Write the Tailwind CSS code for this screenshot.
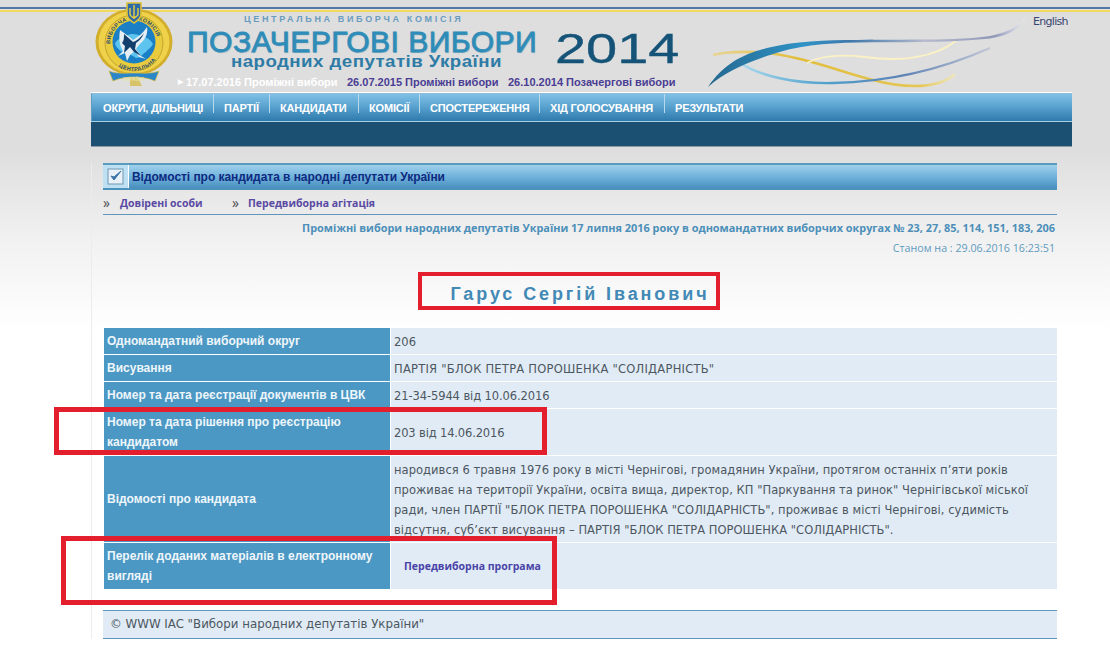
<!DOCTYPE html>
<html lang="uk"><head><meta charset="utf-8"><script src="https://cdn.jsdelivr.net/npm/@tailwindcss/browser@4"></script></head>
<body class="m-0 bg-white font-['Liberation_Sans',sans-serif]">
<div class="relative w-[1110px] h-[667px] overflow-hidden bg-[linear-gradient(#dedede_0,#dedede_150px,#f1f1f1_240px,#ffffff_330px)]">
  <div class="pt-[7px]">
    <div class="h-[2px] bg-[#5577a6]"></div>
    <div class="h-px bg-[#e4e6d8]"></div>
    <div class="h-[2px] bg-[#f2d85c]"></div>
  </div>
  <header class="relative h-[80px] w-[981px] ml-[91px]">
    <svg class="absolute left-[-1px] top-[-12px]" width="90" height="90" viewBox="0 0 90 90">
      <ellipse cx="44" cy="42" rx="38.5" ry="33.5" fill="#d2ae2c"/>
      <ellipse cx="44" cy="42" rx="35.5" ry="31" fill="#efd24a"/>
      <ellipse cx="44" cy="43" rx="29" ry="28" fill="#e9cb3e" stroke="#b79a2c" stroke-width=".8"/>
      <path id="ringt" d="M20 44a24 24 0 0 1 48 0" fill="none"/>
      <path id="ringb" d="M17 44a27 27 0 0 0 54 0" fill="none"/>
      <text font-family="Liberation Sans" font-size="5.5" font-weight="700" fill="#2b4f6e" letter-spacing=".4"><textPath href="#ringt" startOffset="0">ВИБОРЧА</textPath></text>
      <text font-family="Liberation Sans" font-size="5.5" font-weight="700" fill="#2b4f6e" letter-spacing=".4"><textPath href="#ringt" startOffset="42">КОМІСІЯ</textPath></text>
      <text font-family="Liberation Sans" font-size="5.5" font-weight="700" fill="#2b4f6e" letter-spacing=".4"><textPath href="#ringb" startOffset="26">ЦЕНТРАЛЬНА</textPath></text>
      <circle cx="44" cy="42" r="21.5" fill="#1a7fc4"/>
      <path d="M25 44c2-6 7-5 11-8 5-3 10-2 15 0 5 1 9 3 12 8-2 4-5 5-7 8-4 2-5 6-10 6-3-2-6-4-10-4-4-2-9-5-11-10z" fill="#5cc4ee"/>
      <path d="M30 30c4 3 9 6 13 10 5-3 10-7 14-13 1 6-1 11-5 15-3 3-5 5-6 7l5 7 5 3-7-2-4-6-5 4-3 6-2-8-7 3 5-5-2-4c-2-6-2-10-1-17z" fill="#e4eef3"/>
      <path d="M34 34c3 3 6 5 9 8 4-1 8-5 11-9-2 5-5 8-8 10l-1 6 6 7-7-4-4-5-6 6 1-7-3-3c2-2 2-5 2-9z" fill="#123f6c"/>
      <path d="M37 3h14v11c0 5-4 7-7 9-3-2-7-4-7-9z" fill="#2d6ba8" stroke="#dcc038" stroke-width="1.6"/>
      <path d="M44 5v14M40 8v6c0 2 2 3 4 4 2-1 4-2 4-4V8" fill="none" stroke="#e8cc3e" stroke-width="1.4"/>
      <path d="M40 78h8l4 8h-12z" fill="#d8c468"/>
      <path d="M19 71l4 10c7-3 14-4 21-4s14 1 21 4l4-10c-7 3-16 2-25 2s-18 1-25-2z" fill="#2a86c8" stroke="#d8bb3a" stroke-width=".7"/>
      <text x="44" y="80.5" text-anchor="middle" font-family="Liberation Sans" font-size="5" font-weight="700" fill="#e8e3a0">УКРАЇНА</text>
    </svg>
    <div class="absolute left-[153px] top-px text-[9px] leading-[12px] tracking-[2.65px] font-bold text-[#6a9cc0] whitespace-nowrap">ЦЕНТРАЛЬНА ВИБОРЧА КОМІСІЯ</div>
    <div class="absolute left-[96px] top-[18px] text-[30px] leading-[24px] tracking-[0.5px] text-[#2e8cb8] whitespace-nowrap [-webkit-text-stroke:0.8px_#2e8cb8] [text-shadow:1px_1px_1px_#a2b8c4]">ПОЗАЧЕРГОВІ ВИБОРИ</div>
    <div class="absolute left-[140px] top-[42px] text-[17px] leading-[16px] font-bold tracking-[0.4px] scale-x-[1.1] origin-left text-[#2e7ba6] whitespace-nowrap">народних депутатів України</div>
    <div class="absolute left-[464px] top-[11px] text-[43px] leading-[50px] scale-x-[1.3] origin-left text-[#155478] whitespace-nowrap [-webkit-text-stroke:0.4px_#155478]">2014</div>
    <div class="absolute left-[87px] top-[63px] flex items-center text-[11px] leading-[14px] font-bold whitespace-nowrap">
      <span class="text-white text-[7px] w-[8px]">▶</span>
      <span class="text-white w-[161px]">17.07.2016 Проміжні вибори</span>
      <span class="text-[#4a3d94] w-[161px]">26.07.2015 Проміжні вибори</span>
      <span class="text-[#4a3d94]">26.10.2014 Позачергові вибори</span>
    </div>
    <svg class="absolute left-[609px] top-[-2px]" width="340" height="85" viewBox="0 0 340 85" fill="none">
      <path d="M13 45C30 41 55 41 75 44C115 50 140 62 173 70C195 76 235 82 255 64" stroke="url(#b)" stroke-width="2.6"/>
      <path d="M40 53C60 66 95 74 133 73C190 72 240 60 290 38" stroke="url(#c)" stroke-width="2.4"/>
      <path d="M107 53C120 46 140 44 165 47C200 52 235 48 257 30" stroke="#fbf1c4" stroke-width="1.8"/>
      <path d="M8 77C25 52 45 44 67 38C95 31 125 30 157 30C200 29 260 31 290 26C310 22 322 15 326 5C322 20 305 27 285 29C240 33 200 32 157 32.5C125 33 95 36 70 45C45 53 25 62 8 77z" fill="url(#a)"/>
      <defs>
        <linearGradient id="a" x1="0" x2="1"><stop offset="0" stop-color="#24688f"/><stop offset=".3" stop-color="#2f93c6"/><stop offset=".45" stop-color="#3f78ab"/><stop offset=".68" stop-color="#b6bacd"/><stop offset=".9" stop-color="#8e98b8"/><stop offset="1" stop-color="#eeeef2"/></linearGradient>
        <linearGradient id="b" x1="0" x2="1"><stop offset="0" stop-color="#e6d596"/><stop offset=".35" stop-color="#e2bd3c"/><stop offset=".85" stop-color="#e5c654"/><stop offset="1" stop-color="#efe6bc"/></linearGradient>
        <linearGradient id="c" x1="0" x2="1"><stop offset="0" stop-color="#a6d8ee"/><stop offset=".35" stop-color="#4f9fcc"/><stop offset=".65" stop-color="#5d82b4"/><stop offset="1" stop-color="#c3c7d6"/></linearGradient>
      </defs>
    </svg>
    <a class="absolute left-[942px] top-[3px] text-[11px] leading-[13px] font-['DejaVu_Sans',sans-serif] tracking-[-0.7px] text-[#37456e]">English</a>
  </header>
  <nav class="ml-[91px] w-[981px] h-[56px] border-t border-t-white">
    <div class="h-[28px] flex items-start bg-[linear-gradient(#7fc1e6,#5ba3d0_45%,#2d7aac)] border-l border-l-[#5d9dc4] border-t border-t-[#8fbcd6] text-[11px] leading-[14px] tracking-[-0.18px] font-bold text-white [&>a]:pl-[10px] [&>a]:border-r [&>a]:border-r-[#b8d8ec] [&>a]:h-[19px] [&>a]:pt-[7px] [&>a]:whitespace-nowrap">
      <a class="w-[122px] !pl-[11px]">ОКРУГИ, ДІЛЬНИЦІ</a><a class="w-[56px]">ПАРТІЇ</a><a class="w-[89px]">КАНДИДАТИ</a><a class="w-[61px]">КОМІСІЇ</a><a class="w-[120px]">СПОСТЕРЕЖЕННЯ</a><a class="w-[125px]">ХІД ГОЛОСУВАННЯ</a><a class="!border-r-0">РЕЗУЛЬТАТИ</a>
    </div>
    <div class="h-[26px] bg-[#1b5072] border-t border-t-[#a5cfe4] border-b border-b-[#8a99a3]"></div>
  </nav>
  <main class="ml-[91px] mt-[15px] w-[979px] pl-[11px] pr-[13px] border-l border-l-[#ececec]">
    <div class="h-[27px] flex items-stretch border-y-2 border-y-[#4b92bc] border-t-[#5a9abf] bg-[linear-gradient(#9fd0ec,#6db0da_55%,#4a8fbf)]">
      <div class="w-[26px] bg-[#bfe0f3] flex items-center justify-center border-r border-r-white">
        <svg width="17" height="17" viewBox="0 0 17 17"><rect x="1" y="1" width="15" height="15" fill="#e8f1f7" stroke="#6f97b4"/><path d="M4 8l3 4 7-9-7 6z" fill="#3b73a8" stroke="#3b73a8"/></svg>
      </div>
      <div class="pl-[3px] flex items-center text-[12px] tracking-[-0.05px] font-bold text-[#0d2a80] whitespace-nowrap">Відомості про кандидата в народні депутати України</div>
    </div>
    <div class="h-[25px] flex items-center border-b border-b-[#5f97ba] text-[10.5px] leading-[14px] font-bold whitespace-nowrap font-['Open_Sans',sans-serif] pt-px">
      <span class="text-[#4a4a4a] font-normal text-[14px] w-[17px]">»</span><a class="text-[#5a4aa3] w-[112px]">Довірені особи</a><span class="text-[#4a4a4a] font-normal text-[14px] w-[16px]">»</span><a class="text-[#5a4aa3]">Передвиборна агітація</a>
    </div>
    <div class="mt-[5px] text-right text-[10.9px] leading-[16px] font-bold text-[#4c8fb9] pr-[2px] whitespace-nowrap font-['Open_Sans',sans-serif]">Проміжні вибори народних депутатів України 17 липня 2016 року в одномандатних виборчих округах № 23, 27, 85, 114, 151, 183, 206</div>
    <div class="mt-[5px] text-right text-[10.7px] leading-[14px] text-[#5f9bc0] pr-[2px] font-['Open_Sans',sans-serif] whitespace-nowrap">Станом на : 29.06.2016 16:23:51</div>
    <h1 class="mt-[28px] text-center text-[18px] leading-[22px] font-bold tracking-[2.9px] text-[#4289b6] whitespace-nowrap">Гарус Сергій Іванович</h1>
    <div class="mt-[23px] ml-px w-[953px] flex flex-col gap-px text-[12px] leading-[20px] [&>div]:flex [&>div>b]:w-[286px] [&>div>b]:shrink-0 [&>div>b]:bg-[#4c98c4] [&>div>b]:text-[#eef6fb] [&>div>b]:px-[3px] [&>div>b]:flex [&>div>b]:items-center [&>div]:gap-px [&>div>span]:grow [&>div>span]:bg-[#e1ebf5] [&>div>span]:pl-[3px] [&>div>span]:pt-px [&>div>span]:flex [&>div>span]:items-center [&>div>span]:font-['DejaVu_Sans',sans-serif] [&>div>span]:text-[#4c5761] [&>div>span]:text-[11.5px]">
      <div class="h-[26px]"><b>Одномандатний виборчий округ</b><span>206</span></div>
      <div class="h-[26px]"><b>Висування</b><span class="tracking-[0.25px]">ПАРТІЯ "БЛОК ПЕТРА ПОРОШЕНКА "СОЛІДАРНІСТЬ"</span></div>
      <div class="h-[26px]"><b>Номер та дата реєстрації документів в ЦВК</b><span class="tracking-[-0.1px]">21-34-5944 від 10.06.2016</span></div>
      <div class="h-[46px]"><b>Номер та дата рішення про реєстрацію кандидатом</b><span class="tracking-[-0.15px]">203 від 14.06.2016</span></div>
      <div class="h-[86px]"><b>Відомості про кандидата</b><span class="tracking-[0.04px]">народився 6 травня 1976 року в місті Чернігові, громадянин України, протягом останніх п’яти років проживає на території України, освіта вища, директор, КП "Паркування та ринок" Чернігівської міської ради, член ПАРТІЇ "БЛОК ПЕТРА ПОРОШЕНКА "СОЛІДАРНІСТЬ", проживає в місті Чернігові, судимість відсутня, суб’єкт висування – ПАРТІЯ "БЛОК ПЕТРА ПОРОШЕНКА "СОЛІДАРНІСТЬ".</span></div>
      <div class="h-[46px]"><b>Перелік доданих матеріалів в електронному вигляді</b><span><a class="ml-[10px] -mt-px font-['Open_Sans',sans-serif] font-bold text-[10.5px] text-[#4a43a8]">Передвиборна програма</a></span></div>
    </div>
    <footer class="mt-[21px] h-[29px] flex items-center pl-[7px] pt-px bg-[#e1ebf5] border-y border-y-[#5f97ba] font-['DejaVu_Sans',sans-serif] text-[11.8px] text-[#4c5761]">© WWW IAC "Вибори народних депутатів України"</footer>
  </main>
  <div class="absolute left-[418px] top-[272px] w-[302px] h-[38px] border-[4px] border-[#e31e2d]"></div>
  <div class="absolute left-[54px] top-[407px] w-[493px] h-[48px] border-[5px] border-[#e31e2d]"></div>
  <div class="absolute left-[61px] top-[536px] w-[496px] h-[69px] border-[5px] border-[#e31e2d]"></div>
</div>
</body></html>
